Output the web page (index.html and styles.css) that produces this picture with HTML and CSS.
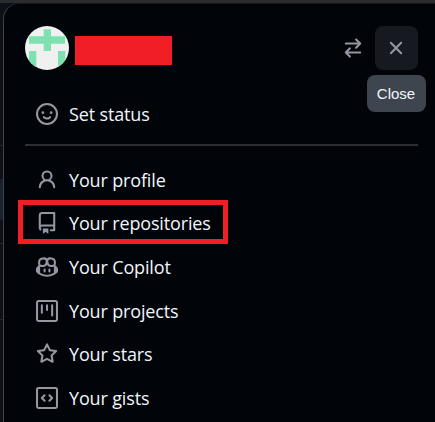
FILE: index.html
```html
<!DOCTYPE html>
<html lang="en">
<head>
    <meta charset="UTF-8">
    <meta name="viewport" content="width=device-width, initial-scale=1.0">
    <title>User menu</title>
    <link rel="stylesheet" href="styles.css">
</head>
<body>
    <div class="panel">
        <div class="header">
            <svg class="avatar" viewBox="0 0 44 44">
                <rect width="44" height="44" fill="#f0f0f0"/>
                <path fill="#7ee2b0" d="M4 10.3h14.7V3.3H26v7h14v7.4H26V25h-7.3v-7.3H4Z"/>
                <path fill="#7ee2b0" d="M4 25h7.3v19H4ZM33 25h7.3v19H33Z"/>
            </svg>
            <div class="name"></div>
            <button class="icon-btn switch">
                <svg class="icon" viewBox="0 0 16 16"><path d="M5.22 14.78a.75.75 0 0 0 1.06-1.06L4.56 12h8.69a.75.75 0 0 0 0-1.5H4.56l1.72-1.72a.75.75 0 0 0-1.06-1.06l-3 3a.75.75 0 0 0 0 1.06l3 3Zm5.56-6.5a.75.75 0 1 1-1.06-1.06l1.72-1.72H2.75a.75.75 0 0 1 0-1.5h8.69L9.72 2.28a.75.75 0 0 1 1.06-1.06l3 3a.75.75 0 0 1 0 1.06l-3 3Z"/></svg>
            </button>
            <button class="icon-btn close">
                <svg class="icon" viewBox="0 0 16 16"><path d="M3.72 3.72a.75.75 0 0 1 1.06 0L8 6.94l3.22-3.22a.749.749 0 0 1 1.275.326.749.749 0 0 1-.215.734L9.06 8l3.22 3.22a.749.749 0 0 1-.326 1.275.749.749 0 0 1-.734-.215L8 9.06l-3.22 3.22a.751.751 0 0 1-1.042-.018.751.751 0 0 1-.018-1.042L6.94 8 3.72 4.78a.75.75 0 0 1 0-1.06Z"/></svg>
                <span class="tooltip">Close</span>
            </button>
        </div>

        <ul class="menu status-menu">
            <li class="item">
                <svg class="icon" viewBox="0 0 16 16"><path d="M8 0a8 8 0 1 1 0 16A8 8 0 0 1 8 0ZM1.5 8a6.5 6.5 0 1 0 13 0 6.5 6.5 0 0 0-13 0Zm3.82 1.636a.75.75 0 0 1 1.038.175l.007.009c.103.118.22.222.35.31.264.178.683.37 1.285.37.602 0 1.02-.192 1.285-.371.13-.088.247-.192.35-.31l.007-.008a.75.75 0 0 1 1.222.87l-.022-.015c.02.013.021.015.021.015v.001l-.001.002-.002.003-.005.007-.014.019a2.066 2.066 0 0 1-.184.213c-.16.166-.338.316-.53.445-.63.418-1.37.638-2.127.629-.946 0-1.652-.308-2.126-.63a3.331 3.331 0 0 1-.715-.657l-.014-.02-.005-.006-.002-.003v-.002h-.001l.613-.432-.614.43a.75.75 0 0 1 .183-1.044ZM12 7a1 1 0 1 1-2 0 1 1 0 0 1 2 0ZM5 8a1 1 0 1 1 0-2 1 1 0 0 1 0 2Zm5.25 2.25.592.416a97.71 97.71 0 0 0-.592-.416Z"/></svg>
                Set status
            </li>
        </ul>

        <div class="divider"></div>

        <ul class="menu">
            <li class="item">
                <svg class="icon" viewBox="0 0 16 16"><path d="M10.561 8.073a6.005 6.005 0 0 1 3.432 5.142.75.75 0 1 1-1.498.07 4.5 4.5 0 0 0-8.99 0 .75.75 0 1 1-1.498-.07 6.004 6.004 0 0 1 3.431-5.142 3.999 3.999 0 1 1 5.123 0ZM10.5 5a2.5 2.5 0 1 0-5 0 2.5 2.5 0 0 0 5 0Z"/></svg>
                Your profile
            </li>
            <li class="item highlighted">
                <svg class="icon" viewBox="0 0 16 16"><path d="M2 2.5A2.5 2.5 0 0 1 4.5 0h8.75a.75.75 0 0 1 .75.75v12.5a.75.75 0 0 1-.75.75h-2.5a.75.75 0 0 1 0-1.5h1.75v-2h-8a1 1 0 0 0-.714 1.7.75.75 0 1 1-1.072 1.05A2.495 2.495 0 0 1 2 11.5Zm10.5-1h-8a1 1 0 0 0-1 1v6.708A2.486 2.486 0 0 1 4.5 9h8ZM5 12.25a.25.25 0 0 1 .25-.25h3.5a.25.25 0 0 1 .25.25v3.25a.25.25 0 0 1-.4.2l-1.45-1.087a.249.249 0 0 0-.3 0L5.4 15.7a.25.25 0 0 1-.4-.2Z"/></svg>
                Your repositories
            </li>
            <li class="item">
                <svg class="icon" viewBox="0 0 16 16"><path d="M7.998 15.035c-4.562 0-7.873-2.914-7.998-3.749V9.338c.085-.628.677-1.686 1.588-2.065.013-.07.024-.143.036-.218.029-.183.06-.384.126-.612-.201-.508-.254-1.084-.254-1.656 0-.87.128-1.769.693-2.484.579-.733 1.494-1.124 2.724-1.261 1.206-.134 2.262.034 2.944.765.05.053.096.108.139.165.044-.057.094-.112.143-.165.682-.731 1.738-.899 2.944-.765 1.23.137 2.145.528 2.724 1.261.566.715.693 1.614.693 2.484 0 .572-.053 1.148-.254 1.656.066.228.098.429.126.612.012.076.024.148.037.218.924.385 1.522 1.471 1.591 2.095v1.872c0 .766-3.351 3.795-8.002 3.795Zm0-1.485c2.28 0 4.584-1.11 5.002-1.433V7.862l-.023-.116c-.49.21-1.075.291-1.727.291-1.146 0-2.059-.327-2.71-.991A3.222 3.222 0 0 1 8 6.303a3.24 3.24 0 0 1-.544.743c-.65.664-1.563.991-2.71.991-.652 0-1.236-.081-1.727-.291l-.023.116v4.255c.419.323 2.722 1.433 5.002 1.433ZM6.762 2.83c-.193-.206-.637-.413-1.682-.297-1.019.113-1.479.404-1.713.7-.247.312-.369.789-.369 1.554 0 .793.129 1.171.308 1.371.162.181.519.379 1.442.379.853 0 1.339-.235 1.638-.54.315-.322.527-.827.617-1.553.117-.935-.037-1.395-.241-1.614Zm4.155-.297c-1.044-.116-1.488.091-1.681.297-.204.219-.359.679-.242 1.614.091.726.303 1.231.618 1.553.299.305.784.54 1.638.54.922 0 1.28-.198 1.442-.379.179-.2.308-.578.308-1.371 0-.765-.123-1.242-.37-1.554-.233-.296-.693-.587-1.713-.7Z"/><path d="M6.25 9.037a.75.75 0 0 1 .75.75v1.501a.75.75 0 0 1-1.5 0V9.787a.75.75 0 0 1 .75-.75Zm4.25.75v1.501a.75.75 0 0 1-1.5 0V9.787a.75.75 0 0 1 1.5 0Z"/></svg>
                Your Copilot
            </li>
            <li class="item">
                <svg class="icon" viewBox="0 0 16 16"><path d="M1.75 0h12.5C15.216 0 16 .784 16 1.75v12.5A1.75 1.75 0 0 1 14.25 16H1.75A1.75 1.75 0 0 1 0 14.25V1.75C0 .784.784 0 1.75 0ZM1.5 1.75v12.5c0 .138.112.25.25.25h12.5a.25.25 0 0 0 .25-.25V1.75a.25.25 0 0 0-.25-.25H1.75a.25.25 0 0 0-.25.25ZM11.75 3a.75.75 0 0 1 .75.75v7.5a.75.75 0 0 1-1.5 0v-7.5a.75.75 0 0 1 .75-.75Zm-8.25.75a.75.75 0 0 1 1.5 0v5.5a.75.75 0 0 1-1.5 0ZM8 3a.75.75 0 0 1 .75.75v3.5a.75.75 0 0 1-1.5 0v-3.5A.75.75 0 0 1 8 3Z"/></svg>
                Your projects
            </li>
            <li class="item">
                <svg class="icon" viewBox="0 0 16 16"><path d="M8 .25a.75.75 0 0 1 .673.418l1.882 3.815 4.21.612a.75.75 0 0 1 .416 1.279l-3.046 2.97.719 4.192a.751.751 0 0 1-1.088.791L8 12.347l-3.766 1.98a.75.75 0 0 1-1.088-.79l.72-4.194L.818 6.374a.75.75 0 0 1 .416-1.28l4.21-.611L7.327.668A.75.75 0 0 1 8 .25Zm0 2.445L6.615 5.5a.75.75 0 0 1-.564.41l-3.097.45 2.24 2.184a.75.75 0 0 1 .216.664l-.528 3.084 2.769-1.456a.75.75 0 0 1 .698 0l2.77 1.456-.53-3.084a.75.75 0 0 1 .216-.664l2.24-2.183-3.096-.45a.75.75 0 0 1-.564-.41L8 2.694Z"/></svg>
                Your stars
            </li>
            <li class="item">
                <svg class="icon" viewBox="0 0 16 16"><path d="M0 1.75C0 .784.784 0 1.75 0h12.5C15.216 0 16 .784 16 1.75v12.5A1.75 1.75 0 0 1 14.25 16H1.75A1.75 1.75 0 0 1 0 14.25Zm1.75-.25a.25.25 0 0 0-.25.25v12.5c0 .138.112.25.25.25h12.5a.25.25 0 0 0 .25-.25V1.75a.25.25 0 0 0-.25-.25Zm7.47 3.97a.75.75 0 0 1 1.06 0l2 2a.75.75 0 0 1 0 1.06l-2 2a.749.749 0 0 1-1.275-.326.749.749 0 0 1 .215-.734L10.69 8 9.22 6.53a.75.75 0 0 1 0-1.06ZM6.78 6.53 5.31 8l1.47 1.47a.749.749 0 0 1-.326 1.275.749.749 0 0 1-.734-.215l-2-2a.75.75 0 0 1 0-1.06l2-2a.751.751 0 0 1 1.042.018.751.751 0 0 1 .018 1.042Z"/></svg>
                Your gists
            </li>
        </ul>
    </div>
</body>
</html>
```

FILE: styles.css
```css
html, body {
    height: 100%;
}

/* the page behind the menu only shows as a thin strip at the top and left */
body {
    margin: 0;
    padding: 3px 0 0 3px;
    box-sizing: border-box;
    overflow: hidden;
    background: linear-gradient(#2b2c30 3px, #0d1117 3px 145px, #21262d 145px 146px, #0d1117 146px 179px, #1b2129 179px 220px, #0d1117 220px 243px, #21262d 243px 244px, #0d1117 244px 319px, #21262d 319px 320px, #0d1117 320px);
    font-family: 'Open Sans', 'Noto Sans', Arial, sans-serif;
    color: #f0f6fc;
}

.panel {
    box-sizing: border-box;
    height: 100%;
    padding: 23px 17px 0 21px;
    background: #010409;
    border-left: 1px solid #3d444d;
    border-top-left-radius: 16px;
    box-shadow: inset 0 1px 0 #15181d;
}

.header {
    display: flex;
    align-items: center;
    height: 44px;
}

.avatar {
    width: 44px;
    height: 44px;
    flex-shrink: 0;
    border-radius: 50%;
}

.name {
    width: 97px;
    height: 29px;
    margin-left: 6px;
    margin-top: 5px;
    background: #f11e26;
}

.icon {
    width: 22px;
    height: 22px;
    flex-shrink: 0;
    fill: #9198a1;
}

.icon-btn {
    position: relative;
    display: flex;
    align-items: center;
    justify-content: center;
    width: 43.5px;
    height: 43.5px;
    padding: 0;
    border: none;
    border-radius: 8px;
    background: none;
}

.switch {
    margin-left: auto;
}

.close {
    background: #16191f;
}

.tooltip {
    position: absolute;
    top: 49px;
    left: -8px;
    width: 59px;
    height: 37px;
    line-height: 37px;
    border-radius: 8px;
    background: #3f454e;
    color: #f0f6fc;
    font-family: inherit;
    font-size: 15px;
    text-align: center;
}

.menu {
    list-style: none;
    margin: 0;
    padding: 0;
}

.status-menu {
    margin-top: 22px;
}

.item {
    position: relative;
    display: flex;
    align-items: center;
    gap: 11px;
    height: 43.6px;
    padding-left: 11px;
    font-size: 18px;
    letter-spacing: -0.15px;
}

.highlighted::after {
    content: "";
    position: absolute;
    top: -2px;
    left: -7px;
    width: 210px;
    height: 44px;
    box-sizing: border-box;
    border: 5px solid #f11e26;
}

.divider {
    height: 2px;
    margin: 8px 0 12.5px;
    background: #2a2f36;
}
```
